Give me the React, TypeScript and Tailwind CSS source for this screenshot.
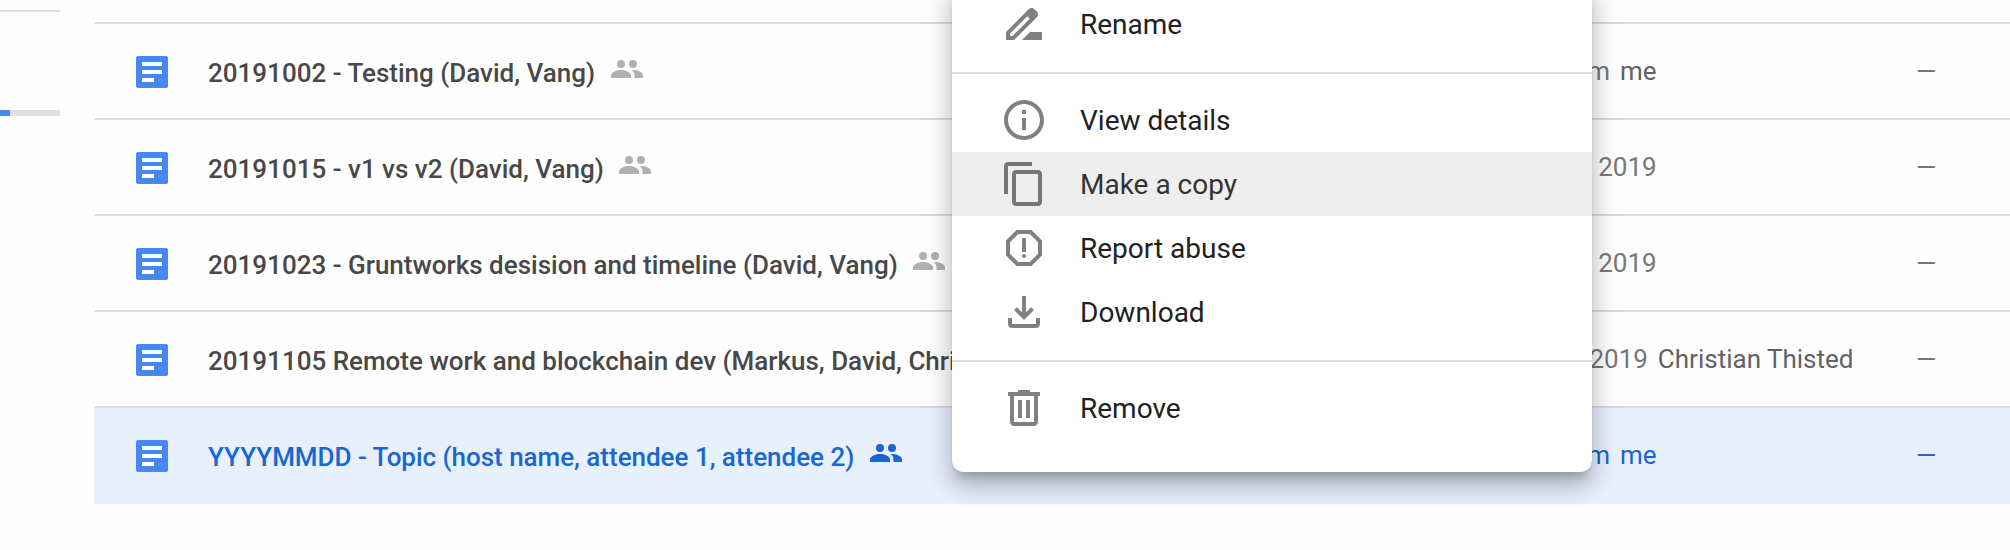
import React from "react";

type Row = { name: string; date: string; by: string; time?: boolean; selected?: boolean };

const ROWS: Row[] = [
  { name: "20191002 - Testing (David, Vang)", date: "3:41 pm", by: "me", time: true },
  { name: "20191015 - v1 vs v2 (David, Vang)", date: "Oct 15, 2019", by: "" },
  { name: "20191023 - Gruntworks desision and timeline (David, Vang)", date: "Oct 23, 2019", by: "" },
  {
    name: "20191105 Remote work and blockchain dev (Markus, David, Christian)",
    date: "Nov 5, 2019",
    by: "Christian Thisted",
  },
  {
    name: "YYYYMMDD - Topic (host name, attendee 1, attendee 2)",
    date: "3:41 pm",
    by: "me",
    time: true,
    selected: true,
  },
];

const ICONS = {
  rename:
    "M18.41 5.8L17.2 4.59c-.78-.78-2.05-.78-2.83 0l-2.68 2.68L3 15.96V20h4.04l8.74-8.74 2.63-2.63c.79-.78.79-2.05 0-2.83zM6.21 18H5v-1.21l8.66-8.66 1.21 1.21L6.21 18zM11 20l4-4h6v4H11z",
  info: "M11 7h2v2h-2zm0 4h2v6h-2zm1-9C6.48 2 2 6.48 2 12s4.48 10 10 10 10-4.48 10-10S17.52 2 12 2zm0 18c-4.41 0-8-3.59-8-8s3.59-8 8-8 8 3.59 8 8-3.59 8-8 8z",
  copy: "M16 1H4c-1.1 0-2 .9-2 2v14h2V3h12V1zm3 4H8c-1.1 0-2 .9-2 2v14c0 1.1.9 2 2 2h11c1.1 0 2-.9 2-2V7c0-1.1-.9-2-2-2zm0 16H8V7h11v14z",
  report:
    "M15.73 3H8.27L3 8.27v7.46L8.27 21h7.46L21 15.73V8.27L15.73 3zM19 14.9L14.9 19H9.1L5 14.9V9.1L9.1 5h5.8L19 9.1v5.8zM11 7h2v7h-2zM12 15a1 1 0 1 0 0 2 1 1 0 1 0 0-2z",
  download:
    "M18 15v3H6v-3H4v3c0 1.1.9 2 2 2h12c1.1 0 2-.9 2-2v-3h-2zm-1-4l-1.41-1.41L13 12.17V4h-2v8.17L8.41 9.59 7 11l5 5 5-5z",
  remove:
    "M15 4V3H9v1H4v2h1v13c0 1.1.9 2 2 2h10c1.1 0 2-.9 2-2V6h1V4h-5zm2 15H7V6h10v13zM9 8h2v9H9zm4 0h2v9h-2z",
};

function DocIcon() {
  return (
    <svg viewBox="0 0 16 16" className="size-8 shrink-0">
      <rect width="16" height="16" rx="1.1" fill="#4688f1" />
      <path d="M3 3h10v2H3zM3 7h10v2H3zM3 11h6v2H3z" fill="#fff" />
    </svg>
  );
}

function PeopleIcon() {
  return (
    <svg viewBox="0 0 32 18" className="-mt-1.5 ml-[15.5px] h-[18px] w-8 shrink-0" fill="currentColor">
      <circle cx="10" cy="4" r="4" />
      <circle cx="22" cy="4" r="4" />
      <path d="M0 18v-2.500C0 12 6 10 10 10s10 2 10 5.500V18zM20.500 10.100c4-.5 11.500 1.400 11.500 5.400V18h-8.500v-2.500c0-2.400-1.200-4.200-3-5.400z" />
    </svg>
  );
}

function FileRow({ row }: { row: Row }) {
  return (
    <div
      className={`flex h-24 items-center border-l-2 border-l-transparent pl-10 text-[26px] ${
        row.selected ? "bg-[#e8f0fe] text-[#1967d2]" : "border-b-2 border-b-[#dadce0] pt-0.5 text-[#484848]"
      }`}
    >
      <DocIcon />
      <div className="ml-10 flex w-[1303px] shrink-0 items-center">
        <span className={`pt-0.5 font-medium whitespace-nowrap ${row.selected ? "tracking-[-0.02px]" : ""}`}>
          {row.name}
        </span>
        <span className={row.selected ? "" : "text-[#b1b1b1]"}>
          <PeopleIcon />
        </span>
      </div>
      <div
        className={`flex w-[405px] shrink-0 whitespace-nowrap pb-0.5 ${row.time ? "pl-[5px]" : ""} ${
          row.selected ? "" : "text-[#777777]"
        }`}
      >
        <span>{row.date}</span>
        <span className={row.selected ? "ml-2.5" : "ml-2.5 text-[#5f6368]"}>{row.by}</span>
      </div>
      <span className={row.selected ? "pb-0.5" : "pb-0.5 text-[#777777]"}>—</span>
    </div>
  );
}

function MenuItem({ icon, label, active }: { icon: keyof typeof ICONS; label: string; active?: boolean }) {
  return (
    <div
      className={`flex h-16 items-center pl-12 text-[28px] ${
        active ? "bg-[#eeeeee] text-[#333333]" : "text-[#202124]"
      }`}
    >
      <svg viewBox="0 0 24 24" className={active ? "size-12 text-[#777777]" : "size-12 text-[#808080]"} fill="currentColor">
        <path d={ICONS[icon]} />
      </svg>
      <span className="ml-8 pt-0.5 whitespace-nowrap">{label}</span>
    </div>
  );
}

export default function App() {
  return (
    <div className="relative flex h-[550px] w-full overflow-hidden bg-[#fefefe] font-['Roboto',sans-serif]">
      <aside className="w-[60px] shrink-0 pt-2.5">
        <div className="h-0.5 bg-[#dadce0]" />
        <div className="mt-[98px] flex h-1.5 bg-[#e0e0e0]">
          <div className="w-2.5 bg-[#4688f1]" />
        </div>
      </aside>
      <main className="ml-[34px] min-w-0 flex-1">
        <div className="h-6 border-b-2 border-l-2 border-b-[#dadce0] border-l-transparent" />
        {ROWS.map((row) => (
          <FileRow key={row.name} row={row} />
        ))}
      </main>
      <div className="absolute -top-5 left-[952px] h-[492px] w-[640px] rounded-xl bg-white pt-3 shadow-[0_10px_10px_-6px_rgba(0,0,0,0.2),0_16px_20px_2px_rgba(0,0,0,0.14),0_6px_28px_4px_rgba(0,0,0,0.12)]">
        <MenuItem icon="rename" label="Rename" />
        <div className="mt-4 mb-3.5 h-0.5 bg-[#dadce0]" />
        <MenuItem icon="info" label="View details" />
        <MenuItem icon="copy" label="Make a copy" active />
        <MenuItem icon="report" label="Report abuse" />
        <MenuItem icon="download" label="Download" />
        <div className="mt-4 mb-3.5 h-0.5 bg-[#dadce0]" />
        <MenuItem icon="remove" label="Remove" />
      </div>
    </div>
  );
}
